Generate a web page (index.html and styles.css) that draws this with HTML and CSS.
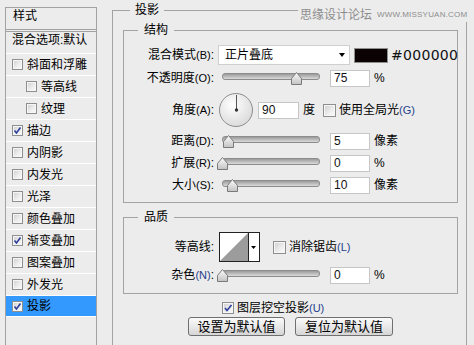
FILE: index.html
```html
<!DOCTYPE html>
<html lang="zh-CN">
<head>
<meta charset="utf-8">
<title>图层样式 - 投影</title>
<link rel="stylesheet" href="styles.css">
</head>
<body>
<div class="dialog">
  <nav class="style-list">
    <div class="list-head">样式</div>
    <div class="list-blend">混合选项:默认</div>
    <div class="list-item"><span class="cb small"></span>斜面和浮雕</div>
    <div class="list-item sub"><span class="cb small"></span>等高线</div>
    <div class="list-item sub"><span class="cb small"></span>纹理</div>
    <div class="list-item"><span class="cb small"><svg class="tick" viewBox="0 0 9 9"><path d="M1.5 4.5 L3.5 7 L7.5 1.5"/></svg></span>描边</div>
    <div class="list-item"><span class="cb small"></span>内阴影</div>
    <div class="list-item"><span class="cb small"></span>内发光</div>
    <div class="list-item"><span class="cb small"></span>光泽</div>
    <div class="list-item"><span class="cb small"></span>颜色叠加</div>
    <div class="list-item"><span class="cb small"><svg class="tick" viewBox="0 0 9 9"><path d="M1.5 4.5 L3.5 7 L7.5 1.5"/></svg></span>渐变叠加</div>
    <div class="list-item"><span class="cb small"></span>图案叠加</div>
    <div class="list-item"><span class="cb small"></span>外发光</div>
    <div class="list-item active"><span class="cb small"><svg class="tick" viewBox="0 0 9 9"><path d="M1.5 4.5 L3.5 7 L7.5 1.5"/></svg></span>投影</div>
  </nav>

  <main class="main">
    <section class="group outer">
      <h2 class="group-title">投影</h2>

      <section class="group structure">
        <h3 class="group-title">结构</h3>

        <div class="row r1">
          <span class="label">混合模式<span class="key">(B)</span>:</span>
          <div class="select"><span>正片叠底</span><span class="caret"></span></div>
          <span class="swatch"></span>
          <span class="hex">#000000</span>
        </div>

        <div class="row r2">
          <span class="label">不透明度<span class="key">(O)</span>:</span>
          <div class="slider"><span class="thumb" style="left:75%"><svg viewBox="0 0 11 13" width="11" height="13"><defs><linearGradient id="tg1" x1="0" y1="0" x2="0" y2="1"><stop offset="0" stop-color="#fdfdfd"/><stop offset="1" stop-color="#c2c2c2"/></linearGradient></defs><path d="M5.5 0.5 L10.5 6.5 V12.5 H0.5 V6.5 Z" fill="url(#tg1)" stroke="#7a7a7a"/></svg></span></div>
          <span class="field">75</span>
          <span class="unit">%</span>
        </div>

        <div class="row r-angle">
          <span class="label">角度<span class="key">(A)</span>:</span>
          <svg class="dial" viewBox="0 0 34 34" width="34" height="34">
            <defs><radialGradient id="dg" cx="40%" cy="35%" r="70%"><stop offset="0" stop-color="#ffffff"/><stop offset="1" stop-color="#d9d9d9"/></radialGradient></defs>
            <circle cx="17" cy="17" r="16.5" fill="url(#dg)" stroke="#8d8d8d"/>
            <line x1="17.5" y1="17" x2="17.5" y2="2" stroke="#555" stroke-width="1"/>
            <circle cx="17.5" cy="17" r="1.7" fill="#333"/>
          </svg>
          <span class="field angle">90</span>
          <span class="unit">度</span>
          <span class="cb"></span>
          <span class="cb-text">使用全局光<span class="key blue">(G)</span></span>
        </div>

        <div class="row r4">
          <span class="label">距离<span class="key">(D)</span>:</span>
          <div class="slider"><span class="thumb" style="left:6%"><svg viewBox="0 0 11 13" width="11" height="13"><defs><linearGradient id="tg2" x1="0" y1="0" x2="0" y2="1"><stop offset="0" stop-color="#fdfdfd"/><stop offset="1" stop-color="#c2c2c2"/></linearGradient></defs><path d="M5.5 0.5 L10.5 6.5 V12.5 H0.5 V6.5 Z" fill="url(#tg2)" stroke="#7a7a7a"/></svg></span></div>
          <span class="field">5</span>
          <span class="unit">像素</span>
        </div>

        <div class="row r5">
          <span class="label">扩展<span class="key">(R)</span>:</span>
          <div class="slider"><span class="thumb" style="left:0%"><svg viewBox="0 0 11 13" width="11" height="13"><defs><linearGradient id="tg3" x1="0" y1="0" x2="0" y2="1"><stop offset="0" stop-color="#fdfdfd"/><stop offset="1" stop-color="#c2c2c2"/></linearGradient></defs><path d="M5.5 0.5 L10.5 6.5 V12.5 H0.5 V6.5 Z" fill="url(#tg3)" stroke="#7a7a7a"/></svg></span></div>
          <span class="field">0</span>
          <span class="unit">%</span>
        </div>

        <div class="row r6">
          <span class="label">大小<span class="key">(S)</span>:</span>
          <div class="slider"><span class="thumb" style="left:10%"><svg viewBox="0 0 11 13" width="11" height="13"><defs><linearGradient id="tg4" x1="0" y1="0" x2="0" y2="1"><stop offset="0" stop-color="#fdfdfd"/><stop offset="1" stop-color="#c2c2c2"/></linearGradient></defs><path d="M5.5 0.5 L10.5 6.5 V12.5 H0.5 V6.5 Z" fill="url(#tg4)" stroke="#7a7a7a"/></svg></span></div>
          <span class="field">10</span>
          <span class="unit">像素</span>
        </div>
      </section>

      <section class="group quality">
        <h3 class="group-title">品质</h3>

        <div class="row q1">
          <span class="label">等高线:</span>
          <svg class="contour" viewBox="0 0 41 30" width="41" height="30">
            <rect x="0.5" y="0.5" width="40" height="29" fill="#ffffff" stroke="#222"/>
            <path d="M1 29 L29 1 V29 Z" fill="#9c9c9c"/>
            <line x1="29.5" y1="0.5" x2="29.5" y2="29.5" stroke="#222"/>
            <path d="M32 14 h5 l-2.5 3 z" fill="#000"/>
          </svg>
          <span class="cb"></span>
          <span class="cb-text">消除锯齿<span class="key blue">(L)</span></span>
        </div>

        <div class="row q2">
          <span class="label">杂色<span class="key blue">(N)</span>:</span>
          <div class="slider"><span class="thumb" style="left:0%"><svg viewBox="0 0 11 13" width="11" height="13"><defs><linearGradient id="tg5" x1="0" y1="0" x2="0" y2="1"><stop offset="0" stop-color="#fdfdfd"/><stop offset="1" stop-color="#c2c2c2"/></linearGradient></defs><path d="M5.5 0.5 L10.5 6.5 V12.5 H0.5 V6.5 Z" fill="url(#tg5)" stroke="#7a7a7a"/></svg></span></div>
          <span class="field">0</span>
          <span class="unit">%</span>
        </div>
      </section>

      <div class="knock">
        <span class="cb knock-cb"><svg class="tick" viewBox="0 0 10 10"><path d="M2 5 L4 7.5 L8.5 2"/></svg></span>
        <span>图层挖空投影<span class="key blue">(U)</span></span>
      </div>

      <div class="buttons">
        <span class="btn">设置为默认值</span>
        <span class="btn wide">复位为默认值</span>
      </div>
    </section>

    <div class="watermark"><span class="wm-cn">思缘设计论坛</span><span class="wm-url">WWW.MISSYUAN.COM</span></div>
  </main>
</div>
</body>
</html>
```

FILE: styles.css
```css
* {
  box-sizing: border-box;
  margin: 0;
  padding: 0;
}

html,
body {
  width: 474px;
  height: 345px;
  overflow: hidden;
}

body {
  background: #ececec;
  font-family: "Liberation Sans", "Noto Sans CJK SC", sans-serif;
  font-size: 12px;
  line-height: 14px;
  color: #000;
}

.dialog {
  display: flex;
  align-items: flex-start;
  padding: 7px 0 0 5px;
}

/* ---------- left style list ---------- */
.style-list {
  flex: none;
  width: 92px;
  height: 350px;
  border: 1px solid #a2a2a2;
}

.list-head {
  height: 24px;
  display: flex;
  align-items: center;
  padding: 0 0 5px 7px;
  border-bottom: 3px double #a2a2a2;
}

.list-blend {
  height: 21px;
  display: flex;
  align-items: center;
  padding: 0 0 5px 6px;
}

.list-item {
  height: 22px;
  display: flex;
  align-items: center;
  padding-left: 6px;
  border-top: 1px solid #ffffff;
}

.list-item.sub {
  padding-left: 20px;
}

.list-item.active {
  background: #3399ff;
  border-bottom: 1px solid #ffffff;
}

/* ---------- checkbox ---------- */
.cb {
  flex: none;
  display: inline-flex;
  align-items: center;
  justify-content: center;
  width: 13px;
  height: 13px;
  border: 1px solid #8e8f8f;
  background: linear-gradient(135deg, #cdcdcd 0%, #ececec 55%, #fbfbfb 100%);
  box-shadow: inset 0 0 0 1px #f6f6f6;
}

.cb.small {
  width: 11px;
  height: 11px;
  margin-right: 4px;
}

.tick {
  width: 100%;
  height: 100%;
  fill: none;
  stroke: #2c3f9c;
  stroke-width: 1.6;
}

/* ---------- main panel ---------- */
.main {
  position: relative;
  flex: none;
  width: 355px;
  margin-left: 15px;
}

.group {
  position: relative;
  border: 1px solid #a3a3a3;
}

.group-title {
  position: absolute;
  top: -9px;
  left: 14px;
  padding: 0 6px;
  background: #ececec;
  font-size: 12px;
  font-weight: normal;
  line-height: 16px;
}

.outer {
  margin-top: 3px;
  height: 350px;
  padding: 19px 8px 0 10px;
}

.outer > .group-title {
  left: 17px;
  padding: 0 5px;
}

.structure {
  padding: 13px 0 6px 0;
}

.quality {
  margin-top: 14px;
  padding: 14px 0 7px 0;
}

.row {
  display: flex;
  align-items: center;
  height: 22px;
  white-space: nowrap;
}

.r2,
.r5 {
  margin-top: 1px;
}

.r-angle {
  height: 42px;
}

.r4 {
  height: 20px;
}

.q1 {
  height: 30px;
}

.q2 {
  margin-top: 2px;
}

.label {
  flex: none;
  width: 90px;
  text-align: right;
}

.key {
  font-size: 11px;
}

.key.blue {
  color: #1f3f8c;
}

/* dropdown */
.select {
  flex: none;
  display: flex;
  align-items: center;
  justify-content: space-between;
  width: 132px;
  height: 20px;
  margin-left: 4px;
  padding: 0 4px 0 6px;
  background: #ffffff;
  border: 1px solid #cfcfcf;
}

.caret {
  width: 0;
  height: 0;
  border-left: 3.5px solid transparent;
  border-right: 3.5px solid transparent;
  border-top: 4px solid #000;
}

.swatch {
  flex: none;
  width: 34px;
  height: 15px;
  margin-left: 4px;
  border: 1px solid #8f8f8f;
  background: #0a0203;
}

.hex {
  margin-left: 3px;
  font-family: "DejaVu Sans", sans-serif;
  font-size: 14px;
  letter-spacing: 0.3px;
  color: #111;
}

/* slider */
.slider {
  position: relative;
  flex: none;
  width: 98px;
  height: 14px;
  margin-left: 8px;
}

.slider::before {
  content: "";
  position: absolute;
  left: 0;
  right: 0;
  top: 2px;
  height: 5px;
  border: 1px solid #8c8c8c;
  border-radius: 3px;
  background: linear-gradient(#9b9b9b, #dadada);
}

.thumb {
  position: absolute;
  top: 1px;
  width: 11px;
  height: 13px;
  margin-left: -5px;
  display: block;
}

.thumb svg {
  display: block;
}

/* fields */
.field {
  flex: none;
  display: flex;
  align-items: center;
  width: 40px;
  height: 17px;
  margin-left: 10px;
  padding-left: 3px;
  background: #ffffff;
  border: 1px solid #c6c6c6;
  color: #111;
}

.field.angle {
  width: 41px;
  margin-left: 5px;
}

.unit {
  margin-left: 4px;
}

.dial {
  flex: none;
  margin-left: 5px;
}

.r-angle .cb {
  margin-left: 8px;
}

.cb-text {
  margin-left: 3px;
}

.contour {
  flex: none;
  margin-left: 5px;
}

.q1 .cb {
  margin-left: 13px;
}

/* bottom */
.knock {
  display: flex;
  align-items: center;
  height: 13px;
  margin-top: 7px;
  padding-left: 99px;
  white-space: nowrap;
}

.knock-cb {
  width: 12px;
  height: 12px;
  margin-right: 3px;
}

.buttons {
  display: flex;
  gap: 10px;
  margin-top: 3px;
  padding-left: 65px;
}

.btn {
  display: flex;
  align-items: center;
  justify-content: center;
  width: 97px;
  height: 19px;
  border: 1px solid #6f6f6f;
  border-radius: 3px;
  background: linear-gradient(#fafafa, #e9e9e9 50%, #d6d6d6);
  font-size: 13px;
}

.btn.wide {
  width: 98px;
}

/* watermark */
.watermark {
  position: absolute;
  top: 1px;
  left: 186px;
  display: flex;
  align-items: center;
  height: 14px;
  padding: 0 2px;
  background: #ececec;
  color: #8c8c8c;
  white-space: nowrap;
}

.wm-cn {
  font-size: 12px;
}

.wm-url {
  margin-left: 5px;
  font-size: 8px;
  letter-spacing: 0.2px;
}
```
